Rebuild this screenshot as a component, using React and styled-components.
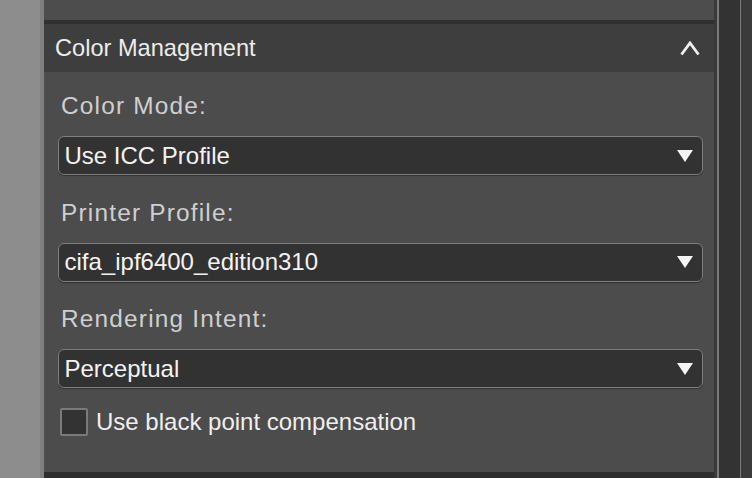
import React from "react";
import styled, { createGlobalStyle } from "styled-components";

const Global = createGlobalStyle`
  html, body { margin: 0; padding: 0; background: #8d8d8d; }
  body { font-family: "Liberation Sans", Arial, sans-serif; }
  * { box-sizing: border-box; }
`;

const Page = styled.div`
  display: flex;
  width: 752px;
  height: 478px;
  overflow: hidden;
  background: #8d8d8d;
`;

const LeftStrip = styled.div`
  width: 40px;
  flex: none;
  background: #8d8d8d;
`;

const LeftEdge = styled.div`
  width: 4px;
  flex: none;
  background: #7f7f7f;
`;

const Panel = styled.div`
  flex: 1;
  display: flex;
  flex-direction: column;
  min-width: 0;
`;

const PrevSection = styled.div`
  height: 20px;
  flex: none;
  background: #4d4d4d;
`;

const Divider = styled.div`
  height: ${(p) => p.$h}px;
  flex: none;
  background: #2f2f2f;
`;

const Header = styled.div`
  height: 48px;
  flex: none;
  background: #3e3e3e;
  display: flex;
  align-items: center;
  justify-content: space-between;
  padding: 0 14px 0 11px;
  color: #ececec;
  font-size: 23.6px;
`;

const Body = styled.div`
  flex: 1;
  background: #4c4c4c;
  padding: 20px 11px 0 14px;
  display: flex;
  flex-direction: column;
  gap: 23.5px;
`;

const Field = styled.div`
  display: flex;
  flex-direction: column;
  gap: 16px;
`;

const Label = styled.div`
  height: 28px;
  line-height: 28px;
  font-size: 24.4px;
  letter-spacing: 1.2px;
  color: #cfcfcf;
  padding-left: 3px;
`;

const SelectBox = styled.div`
  height: 39px;
  border: 1.5px solid #7e7e7e;
  border-radius: 6px;
  background: #323232;
  box-shadow: 0 1px 1px rgba(0, 0, 0, 0.35);
  display: flex;
  align-items: center;
  justify-content: space-between;
  padding: 0 9px 0 5.5px;
  color: #f3f3f3;
  font-size: 24px;
`;

const CheckRow = styled.label`
  display: flex;
  align-items: center;
  gap: 8px;
  padding-left: 2px;
  margin-top: -3.5px;
  color: #efefef;
  font-size: 24px;
`;

const Box = styled.span`
  width: 28px;
  height: 28px;
  flex: none;
  background: #333333;
  border: 2px solid #7a7a7a;
  border-radius: 2px;
`;

const BottomBorder = styled.div`
  height: 6px;
  flex: none;
  background: #2e2e2e;
`;

const Gutter = styled.div`
  width: 38px;
  flex: none;
  display: flex;
  background: #333333;
`;

const GutterLine = styled.div`
  width: ${(p) => p.$w}px;
  flex: none;
  background: ${(p) => p.$c};
`;

const GutterFill = styled.div`
  flex: ${(p) => (p.$grow ? 1 : "none")};
  width: ${(p) => (p.$grow ? "auto" : `${p.$w}px`)};
  background: ${(p) => p.$c};
`;

const Arrow = () => (
  <svg width="16" height="12" viewBox="0 0 16 12">
    <polygon points="0,0 16,0 8,12" fill="#f5f5f5" />
  </svg>
);

const Chevron = () => (
  <svg width="20" height="15" viewBox="0 0 20 15">
    <polyline
      points="1.5,13.5 10,2 18.5,13.5"
      fill="none"
      stroke="#eeeeee"
      strokeWidth="2.8"
    />
  </svg>
);

const fields = [
  { label: "Color Mode:", value: "Use ICC Profile" },
  { label: "Printer Profile:", value: "cifa_ipf6400_edition310" },
  { label: "Rendering Intent:", value: "Perceptual" },
];

export default function App() {
  return (
    <>
      <Global />
      <Page>
        <LeftStrip />
        <LeftEdge />
        <Panel>
          <PrevSection />
          <Divider $h={4} />
          <Header>
            <span>Color Management</span>
            <Chevron />
          </Header>
          <Body>
            {fields.map((f) => (
              <Field key={f.label}>
                <Label>{f.label}</Label>
                <SelectBox>
                  <span>{f.value}</span>
                  <Arrow />
                </SelectBox>
              </Field>
            ))}
            <CheckRow>
              <Box />
              <span>Use black point compensation</span>
            </CheckRow>
          </Body>
          <BottomBorder />
        </Panel>
        <Gutter>
          <GutterLine $w={3} $c="#3a3a3a" />
          <GutterLine $w={1.5} $c="#7a7a7a" />
          <GutterFill $grow $c="#333333" />
          <GutterLine $w={1.5} $c="#7a7a7a" />
          <GutterFill $w={11} $c="#3b3b3b" />
        </Gutter>
      </Page>
    </>
  );
}
